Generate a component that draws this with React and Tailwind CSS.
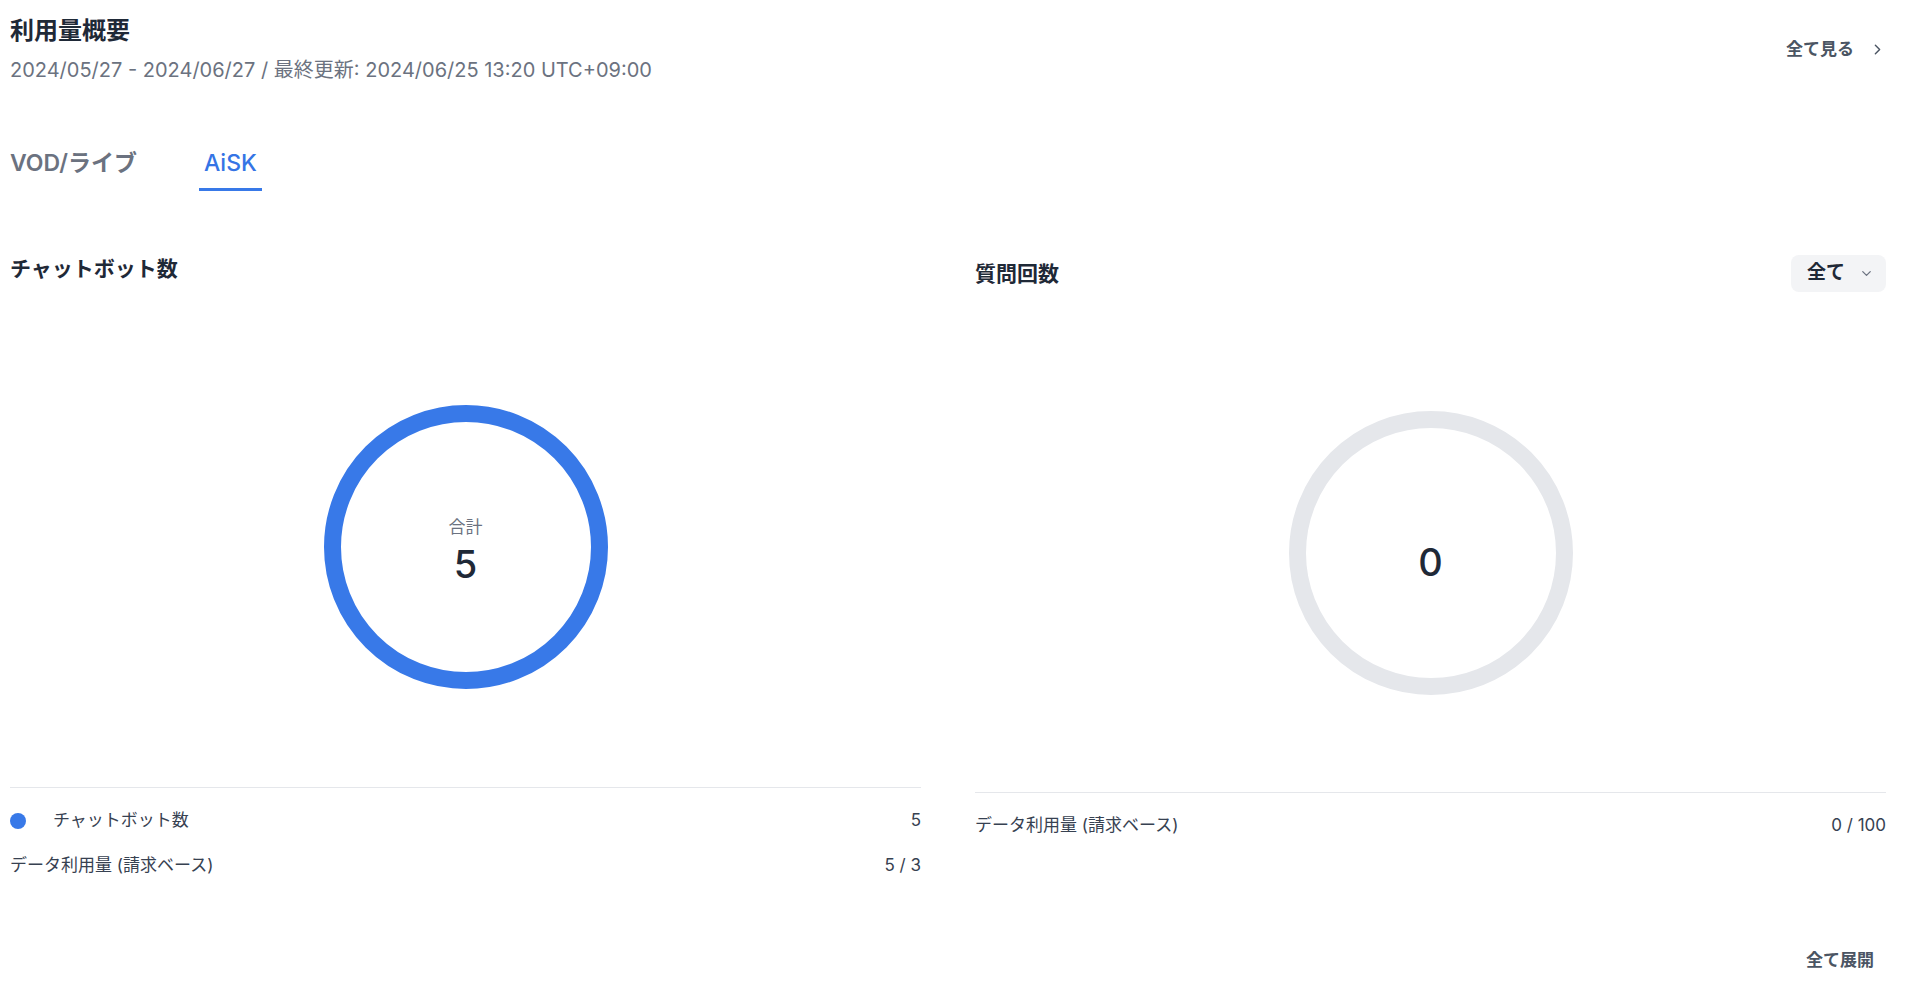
import { ChevronRight, ChevronDown } from 'lucide-react';

// Donut ring drawn as svg; value ring in blue, empty ring in gray
function Donut({ color, children }) {
  return (
    <div className="relative w-[284px] h-[284px]">
      <svg width="284" height="284" viewBox="0 0 284 284">
        <circle cx="142" cy="142" r="133.5" fill="none" stroke={color} strokeWidth="17" />
      </svg>
      <div className="absolute inset-0 flex flex-col items-center justify-center">{children}</div>
    </div>
  );
}

function Row({ label, value, dot }) {
  return (
    <div className="flex items-center justify-between h-[28px] text-[17px] text-[#374151]">
      <div className="flex items-center">
        {dot && <span className="w-[16px] h-[16px] rounded-full bg-[#3879e8] mr-[27px]" />}
        <span>{label}</span>
      </div>
      <span>{value}</span>
    </div>
  );
}

export default function App() {
  return (
    <div className="w-full h-[995px] bg-white pl-[10px] pr-[22px] font-['Inter','Noto_Sans_CJK_JP',sans-serif] text-[#1f2937]">
      {/* Header */}
      <div className="flex justify-between items-start pt-[15px]">
        <div>
          <h1 className="text-[24px] leading-[32px] font-bold text-[#1f2937]">利用量概要</h1>
          <p className="mt-[9px] text-[20px] leading-[28px] text-[#6b7280]">
            2024/05/27 - 2024/06/27 / 最終更新: 2024/06/25 13:20 UTC+09:00
          </p>
        </div>
        <button className="flex items-center mt-[22px] text-[17px] leading-[24px] font-semibold text-[#4b5563]">
          全て見る
          <ChevronRight size={17} strokeWidth={2} className="ml-[15px] text-[#4b5563]" />
        </button>
      </div>

      {/* Tabs */}
      <div className="flex items-end mt-[63px]">
        <div className="h-[44px] text-[23px] leading-[32px] font-semibold text-[#6b7280]">VOD/ライブ</div>
        <div className="ml-[62px] px-[5px] h-[44px] border-b-[3px] border-[#3879e8] text-[23px] leading-[32px] font-medium text-[#3574e5]">
          AiSK
        </div>
      </div>

      {/* Panels */}
      <div className="grid grid-cols-2 gap-[54px] mt-[64px]">
        {/* Left */}
        <div>
          <h2 className="h-[31px] text-[21px] leading-[27px] font-bold">チャットボット数</h2>
          <div className="flex justify-center pt-[119px] pb-[98px]">
            <Donut color="#3879e8">
              <span className="pt-[6px] text-[17px] leading-[24px] text-[#6b7280]">合計</span>
              <span className="mt-[4px] text-[38px] leading-[42px] font-medium text-[#1f2937]">5</span>
            </Donut>
          </div>
          <div className="border-t border-[#e5e7eb] pt-[19px]">
            <Row dot label="チャットボット数" value="5" />
            <div className="mt-[17px]">
              <Row label="データ利用量 (請求ベース)" value="5 / 3" />
            </div>
          </div>
        </div>

        {/* Right */}
        <div>
          <div className="flex items-center justify-between h-[37px]">
            <h2 className="text-[21px] leading-[31px] font-bold">質問回数</h2>
            <button className="flex items-center h-[37px] pl-[16px] pr-[12px] rounded-[8px] bg-[#f3f4f6] text-[19px] font-bold text-[#1f2937]">
              全て
              <ChevronDown size={15} strokeWidth={2} className="ml-[14px] text-[#6b7280]" />
            </button>
          </div>
          <div className="flex justify-center pt-[119px] pb-[97px]">
            <Donut color="#e5e7eb">
              <span className="pt-[18px] text-[38px] leading-[42px] font-medium text-[#1f2937]">0</span>
            </Donut>
          </div>
          <div className="border-t border-[#e5e7eb] pt-[19px]">
            <Row label="データ利用量 (請求ベース)" value="0 / 100" />
          </div>
        </div>
      </div>

      <div className="flex justify-end pr-[12px] mt-[68px]">
        <button className="text-[17px] leading-[24px] font-semibold text-[#4b5563]">全て展開</button>
      </div>
    </div>
  );
}
